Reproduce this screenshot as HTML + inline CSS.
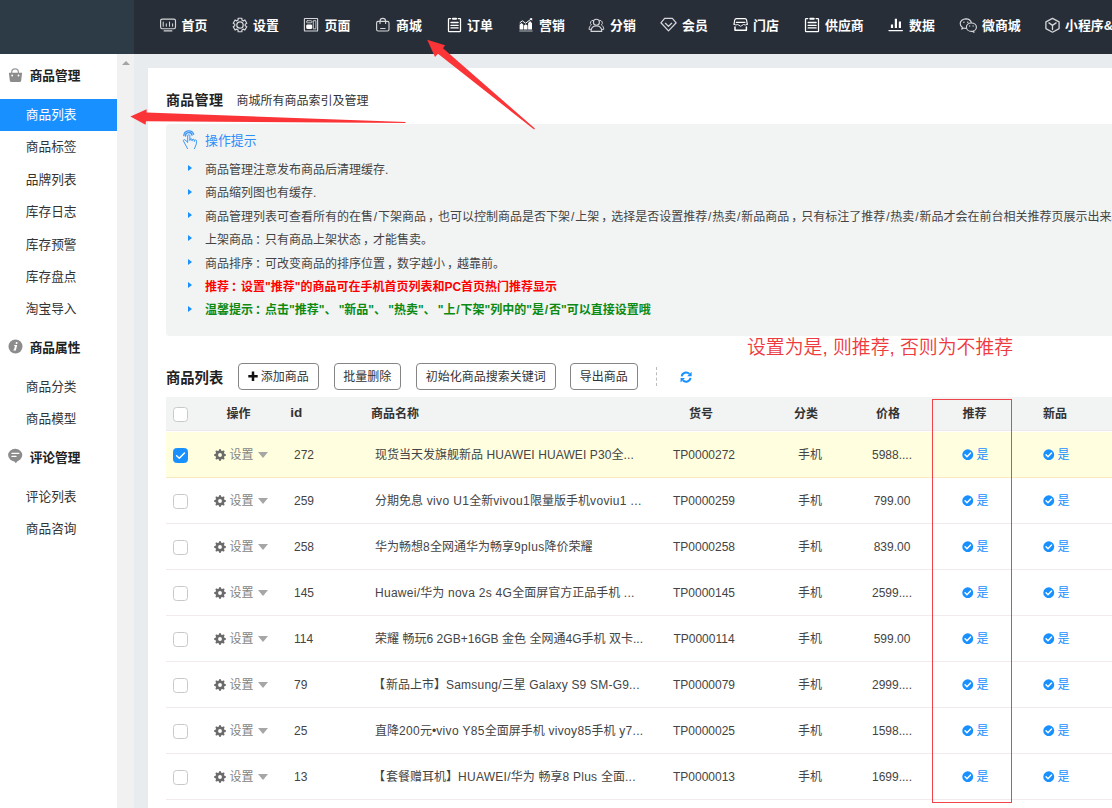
<!DOCTYPE html>
<html lang="zh-CN">
<head>
<meta charset="utf-8">
<title>商品管理</title>
<style>
*{box-sizing:border-box;margin:0;padding:0}
html,body{width:1112px;height:808px;overflow:hidden}
body{position:relative;background:#e9ecef;font-family:"Liberation Sans","Noto Sans CJK SC",sans-serif;font-size:12px;color:#444}
/* top nav */
#nav{position:absolute;left:0;top:0;width:1112px;height:54px;background:#282e38;overflow:hidden}
#navL{position:absolute;left:0;top:0;width:134px;height:54px;background:#2c3b45}
.nic{position:absolute;top:17px;width:18px;height:16px;overflow:visible}
.nt{position:absolute;top:15.600px;color:#fff;font-weight:bold;font-size:12.900px;line-height:20px;white-space:nowrap}
/* sidebar */
#side{position:absolute;left:0;top:54px;width:117px;height:754px;background:#fff}
#gut{position:absolute;left:117px;top:54px;width:17px;height:754px;background:#f1f1f1}
#gut i{position:absolute;left:4.500px;top:7px;width:0;height:0;border-left:4px solid transparent;border-right:4px solid transparent;border-bottom:4.500px solid #a3a3a3}
.sg{position:relative;height:45px;line-height:45px;font-size:12.700px;font-weight:bold;color:#222;padding-left:29.700px}
.sg svg{position:absolute;left:8px;top:14px;width:15px;height:15px;overflow:visible}
.si{height:32.400px;line-height:32.400px;font-size:12.700px;color:#333;padding-left:25.800px}
.si.on{background:#1890ff;color:#fff}
/* card */
#card{position:absolute;left:148px;top:68px;width:964px;height:740px;background:#fff}
#ttl{position:absolute;left:166px;top:90.300px;font-size:14px;letter-spacing:.3px;font-weight:bold;color:#222;line-height:20px}
#sub{position:absolute;left:236.500px;top:90.500px;font-size:12px;color:#333;line-height:20px}
#tips{position:absolute;left:166px;top:124px;width:960px;height:212px;background:#f2f4f4;border-radius:3.500px}
#hand{position:absolute;left:181px;top:130px;width:18px;height:20px;overflow:visible}
#tipt{position:absolute;left:205px;top:130.500px;font-size:12.900px;color:#2f8ef8;line-height:20px}
.tl{position:absolute;left:205px;font-size:12px;line-height:20px;color:#444;white-space:nowrap}
.tl i{position:absolute;left:-17px;top:5.200px;width:0;height:0;border-top:3.800px solid transparent;border-bottom:3.800px solid transparent;border-left:4.900px solid #1890ff}
.tl s{text-decoration:none;padding:0 .850px}
.tl u{text-decoration:none;margin-right:2.200px}
.tl em{font-style:normal;position:relative;left:2px}
.tl.r{color:#f00;font-weight:bold}
.tl.g{color:#0c8a12;font-weight:bold}
#ann{position:absolute;left:747px;top:334.700px;font-size:18.860px;line-height:26px;color:#ee3a3e;font-weight:350;white-space:nowrap}
/* toolbar */
#lt{position:absolute;left:166px;top:367.700px;font-size:14.300px;font-weight:bold;color:#222;line-height:20px}
.btn{position:absolute;top:363px;height:26.500px;border:1px solid #858585;border-radius:4px;background:#fff;font-size:12px;line-height:26.900px;color:#333;text-align:center;overflow:hidden;white-space:nowrap}
.btn b{position:absolute;left:9px;top:0;font-size:0}
#sep{position:absolute;left:656px;top:367px;width:0;height:19px;border-left:1px dashed #bbb}
#rf{position:absolute;left:679.500px;top:371.300px;width:12.200px;height:12.200px;overflow:visible}
/* table */
#th{position:absolute;left:166px;top:397px;width:946px;height:34px;border-bottom:1px solid #f1e8ea;background:#f2f4f4;font-weight:bold;color:#333}
#th span{position:absolute;top:7px;line-height:20px;font-size:12px;white-space:nowrap}
.tr{position:absolute;left:166px;width:946px;height:46px;border-bottom:1px solid #f2eaec;background:#fff}
.tr.sel{background:#ffffdf;border-bottom-color:#fbe9c4}
.cb{position:absolute;left:7px;top:15.900px;width:15px;height:15px;border:1px solid #c9c9c9;border-radius:3.500px;background:#fff}
.cb.on{background:#1890ff;border-color:#1890ff}
.cb svg{position:absolute;left:-1px;top:-1px;width:15px;height:15px}
.gr{position:absolute;left:48px;top:17.400px;width:12px;height:12px}
.car{position:absolute;left:92.200px;top:19.900px;width:0;height:0;border-left:5.400px solid transparent;border-right:5.400px solid transparent;border-top:6.300px solid #a6a6a6}
.c{position:absolute;top:12.800px;line-height:20px;font-size:12px;white-space:nowrap;color:#444}
.set{left:63.400px;margin-top:.5px;color:#858585}
.id{left:128px}
.nm{left:209px}
.br{margin-left:-2px;margin-right:1px}
.sn{left:488px;width:100px;text-align:center}
.cat{left:604px;width:80px;text-align:center}
.pr{left:686px;width:80px;text-align:center}
.y1,.y2{color:#1890ff}
.y1{left:796px} .y2{left:877px}
.ck{display:inline-block;vertical-align:-1.500px;width:11.500px;height:11.500px;margin-right:3px}
#box{position:absolute;left:932px;top:399px;width:80px;height:404px;border:1px solid #f0444a}
#arrows{position:absolute;left:0;top:0;width:1112px;height:808px;pointer-events:none}
</style>
</head>
<body>
<div id="nav">
<svg class="nic" style="left:159px" viewBox="0 0 18 16"><rect x="1.6" y="2.1" width="14.9" height="9.6" rx="1.6" fill="none" stroke="#d4d6d9" stroke-width="1.15" stroke-linecap="round" stroke-linejoin="round"/><path d="M5.2 13.9h7.6" fill="none" stroke="#d4d6d9" stroke-width="1.3" stroke-linecap="round" stroke-linejoin="round"/><path d="M4.2 5v4.300M7.300 6.800v2.500M10.500 5v4.300M13.600 6.800v2.500" fill="none" stroke="#d4d6d9" stroke-width="1.050" stroke-linecap="round" stroke-linejoin="round"/></svg><span class="nt" style="left:181.5px">首页</span>
<svg class="nic" style="left:232px" viewBox="0 0 18 16"><path d="M6.10 3.05 L6.10 1.25 L9.90 1.25 L9.90 3.05 L11.34 3.88 L12.90 2.98 L14.80 6.27 L13.23 7.17 L13.23 8.83 L14.80 9.73 L12.90 13.02 L11.34 12.12 L9.90 12.95 L9.90 14.75 L6.10 14.75 L6.10 12.95 L4.66 12.12 L3.10 13.02 L1.20 9.73 L2.77 8.83 L2.77 7.17 L1.20 6.27 L3.10 2.98 L4.66 3.88Z" fill="none" stroke="#d4d6d9" stroke-width="1.2" stroke-linecap="round" stroke-linejoin="round"/><circle cx="8" cy="8" r="3.2" fill="none" stroke="#d4d6d9" stroke-width="1.3" stroke-linecap="round" stroke-linejoin="round"/></svg><span class="nt" style="left:253px">设置</span>
<svg class="nic" style="left:303px" viewBox="0 0 18 16"><rect x="1.400" y="1.500" width="13.200" height="12.500" rx=".6" fill="none" stroke="#d4d6d9" stroke-width="1.15" stroke-linecap="round" stroke-linejoin="round"/><rect x="3.400" y="3.700" width="5.600" height="2.100" rx="1.050" fill="none" stroke="#d4d6d9" stroke-width=".9" stroke-linecap="round" stroke-linejoin="round"/><rect x="3.200" y="7.400" width="6" height="4.700" rx="1.400" fill="#fff"/><rect x="10.700" y="3.700" width="2.200" height="8.200" fill="none" stroke="#d4d6d9" stroke-width=".9" stroke-linecap="round" stroke-linejoin="round"/></svg><span class="nt" style="left:324.5px">页面</span>
<svg class="nic" style="left:375px" viewBox="0 0 18 16"><rect x="1.600" y="4.400" width="12.400" height="9.600" rx="1.500" fill="none" stroke="#d4d6d9" stroke-width="1.15" stroke-linecap="round" stroke-linejoin="round"/><path d="M5 6.500V4.200a2.800 2.800 0 0 1 5.600 0v2.300" fill="none" stroke="#d4d6d9" stroke-width="1.15" stroke-linecap="round" stroke-linejoin="round"/><path d="M5.600 11.500h4.500" fill="none" stroke="#d4d6d9" stroke-width="1.15" stroke-linecap="round" stroke-linejoin="round"/></svg><span class="nt" style="left:396px">商城</span>
<svg class="nic" style="left:447px" viewBox="0 0 18 16"><path d="M3.700 1.600H2.100a.6.6 0 0 0-.6.6V13.900a.6.6 0 0 0 .6.6H12.900a.6.6 0 0 0 .6-.6V2.200a.6.6 0 0 0-.6-.6H11.200" fill="none" stroke="#fff" stroke-width="1.250" stroke-linecap="round" stroke-linejoin="round"/><path d="M5.900 1.700h3.200" fill="none" stroke="#fff" stroke-width="1.900" stroke-linecap="round" stroke-linejoin="round"/><path d="M4 5.500h7.100M4 8.400h7.100M4 10.900h7.100" fill="none" stroke="#fff" stroke-width="1.350" stroke-linecap="round" stroke-linejoin="round"/></svg><span class="nt" style="left:467px">订单</span>
<svg class="nic" style="left:518px" viewBox="0 0 18 16"><path d="M1.600 12.500V7.700l1.900-1.800 1.900 1.800v4.800zM6 12.500V8.500l1.800-1.300 1.700 1.300v4zM10.100 12.500V6.200l2-2.200 1.900 2.200v6.300z" fill="#fff"/><path d="M1.300 14h13.300" fill="none" stroke="#c2c4c8" stroke-width=".9"/><path d="M1.700 5.900l2.600-2.100 3.300 2.400 6-4.600" fill="none" stroke="#fff" stroke-width="1"/><path d="M11.600 1.300h2.600v2.500z" fill="#fff"/></svg><span class="nt" style="left:539px">营销</span>
<svg class="nic" style="left:588px" viewBox="0 0 18 16"><circle cx="8.400" cy="5.200" r="3" fill="none" stroke="#d4d6d9" stroke-width="1.15" stroke-linecap="round" stroke-linejoin="round"/><path d="M3 14.300c0-3.300 2.300-5.300 5.400-5.300s5.400 2 5.400 5.300z" fill="none" stroke="#d4d6d9" stroke-width="1.15" stroke-linecap="round" stroke-linejoin="round"/><path d="M5.300 3.300A2.600 2.600 0 0 0 3.400 7.900C1.900 8.800 1.100 10.300 1 12.400h1.700" fill="none" stroke="#d4d6d9" stroke-width=".95" stroke-linecap="round" stroke-linejoin="round"/><path d="M11.500 3.300a2.600 2.600 0 0 1 1.900 4.600c1.500.9 2.300 2.400 2.400 4.500h-1.700" fill="none" stroke="#d4d6d9" stroke-width=".95" stroke-linecap="round" stroke-linejoin="round"/></svg><span class="nt" style="left:610px">分销</span>
<svg class="nic" style="left:660px" viewBox="0 0 18 16"><path d="M4.600 1.400h7.800l3.800 4.400-7.700 8.100L.9 5.800z" fill="none" stroke="#d4d6d9" stroke-width="1.250" stroke-linecap="round" stroke-linejoin="round"/><path d="M5.400 6.300l3.100 3.100 3.100-3.100" fill="none" stroke="#d4d6d9" stroke-width="1.250" stroke-linecap="round" stroke-linejoin="round"/></svg><span class="nt" style="left:682px">会员</span>
<svg class="nic" style="left:733px" viewBox="0 0 18 16"><path d="M1 7.300L1.700 3.100Q2 1.600 3.400 1.600H11.900Q13.300 1.600 13.600 3.100L14.300 7.300" fill="none" stroke="#fff" stroke-width="1.150" stroke-linecap="round" stroke-linejoin="round"/><path d="M3.400 5.400h8.500" fill="none" stroke="#fff" stroke-width="1.250" stroke-linecap="round" stroke-linejoin="round"/><path d="M1 7.400Q3 8.600 4.800 7.500L7.650 9.300L10.500 7.500Q12.300 8.600 14.300 7.400" fill="none" stroke="#fff" stroke-width=".9" stroke-linecap="round" stroke-linejoin="round"/><path d="M2 10V13.300H13.400V10" fill="none" stroke="#fff" stroke-width="1.500" stroke-linecap="round" stroke-linejoin="round"/></svg><span class="nt" style="left:753px">门店</span>
<svg class="nic" style="left:804px" viewBox="0 0 18 16"><path d="M3.700 1.600H2.100a.6.6 0 0 0-.6.6V13.900a.6.6 0 0 0 .6.6H13.900a.6.6 0 0 0 .6-.6V2.200a.6.6 0 0 0-.6-.6H12.100" fill="none" stroke="#fff" stroke-width="1.250" stroke-linecap="round" stroke-linejoin="round"/><path d="M6.200 1.700h3.600" fill="none" stroke="#fff" stroke-width="1.900" stroke-linecap="round" stroke-linejoin="round"/><path d="M4.200 5.500h7.900M4.200 8.400h7.900M4.200 10.900h7.900" fill="none" stroke="#fff" stroke-width="1.350" stroke-linecap="round" stroke-linejoin="round"/></svg><span class="nt" style="left:825px">供应商</span>
<svg class="nic" style="left:888px" viewBox="0 0 18 16"><path d="M4 7.500v3.400M7.900 1.700v9.200M11.900 4.400v6.500" fill="none" stroke="#fff" stroke-width="2.200" stroke-linecap="butt"/><path d="M1 13.600h13.400" fill="none" stroke="#fff" stroke-width="1.300" stroke-linecap="round"/></svg><span class="nt" style="left:909px">数据</span>
<svg class="nic" style="left:959px" viewBox="0 0 18 16"><path d="M7 1.900C3.700 1.900 1.200 4 1.200 6.600c0 1.500.8 2.800 2.100 3.700l-.5 1.800 2-1.100c.6.200 1.300.300 1.900.300" fill="none" stroke="#d4d6d9" stroke-width="1.15" stroke-linecap="round" stroke-linejoin="round"/><path d="M12.500 6.400C12 3.800 9.800 1.900 7 1.900" fill="none" stroke="#d4d6d9" stroke-width="1.15" stroke-linecap="round" stroke-linejoin="round"/><ellipse cx="12.400" cy="10.200" rx="5" ry="4.200" stroke="#d4d6d9" stroke-width="1.150" fill="#282e38"/><path d="M14.600 14l.4 1.300-1.500-.8" fill="none" stroke="#d4d6d9" stroke-width="1.15" stroke-linecap="round" stroke-linejoin="round"/><circle cx="4.900" cy="5.200" r=".7" fill="#d4d6d9"/><circle cx="8.800" cy="5.200" r=".7" fill="#d4d6d9"/><circle cx="10.700" cy="9" r=".65" fill="#d4d6d9"/><circle cx="14.100" cy="9" r=".65" fill="#d4d6d9"/></svg><span class="nt" style="left:982px">微商城</span>
<svg class="nic" style="left:1045px" viewBox="0 0 18 16"><path d="M7.500 1.400l6.600 3.500v6.700l-6.600 3.600-6.600-3.600V4.900z" fill="none" stroke="#d4d6d9" stroke-width="1.300" stroke-linecap="round" stroke-linejoin="round"/><path d="M3.900 5.900l3.600 2.500 3.600-2.500M7.500 8.400v4.200" fill="none" stroke="#d4d6d9" stroke-width="1.300" stroke-linecap="round" stroke-linejoin="round"/></svg><span class="nt" style="left:1065px">小程序&amp;</span>
</div>
<div id="navL"></div>
<div id="side">
<div class="sg"><svg viewBox="0 0 15 15"><path d="M3.700 5.200V4.300a3.350 3.350 0 0 1 6.700 0v.9" fill="none" stroke="#999" stroke-width="1.200"/><path d="M.9 4.700h13.200l-.9 7.900a1.600 1.600 0 0 1-1.600 1.500H3.400a1.600 1.600 0 0 1-1.600-1.500z" fill="#8c8c8c"/><circle cx="4.200" cy="7.500" r=".95" fill="#fff"/><circle cx="10.500" cy="7.500" r=".95" fill="#fff"/></svg>商品管理</div>
<div class="si on">商品列表</div>
<div class="si">商品标签</div>
<div class="si">品牌列表</div>
<div class="si">库存日志</div>
<div class="si">库存预警</div>
<div class="si">库存盘点</div>
<div class="si">淘宝导入</div>
<div class="sg"><svg style="top:13.100px;left:7.800px" viewBox="0 0 15 15"><circle cx="7.500" cy="7.500" r="7" fill="#8c8c8c"/><circle cx="8.600" cy="4" r="1.050" fill="#fff"/><path d="M7.200 6.100h2l-1.350 5.300h-2zM6.300 6.100h2.200v.8H6.100zM5.500 10.600h2.600l-.2.800H5.300z" fill="#fff"/></svg>商品属性</div>
<div class="si">商品分类</div>
<div class="si">商品模型</div>
<div class="sg"><svg style="top:13.500px" viewBox="0 0 15 15"><ellipse cx="7.200" cy="6.100" rx="7.100" ry="6.300" fill="#8c8c8c"/><path d="M5.800 11.700L7.800 14.300L10.200 11.300z" fill="#8c8c8c"/><path d="M3.900 4.300h7M3.900 7.400h4.100" stroke="#fff" stroke-width="1.250" stroke-linecap="round" fill="none"/></svg>评论管理</div>
<div class="si">评论列表</div>
<div class="si">商品咨询</div>
</div>
<div id="gut"><i></i></div>
<div id="card"></div>
<div id="ttl">商品管理</div>
<div id="sub">商城所有商品索引及管理</div>
<div id="tips"></div>
<svg id="hand" viewBox="0 0 18 20"><g fill="none" stroke="#3f98f7" stroke-width="1" stroke-linecap="round" stroke-linejoin="round"><path d="M6.700 12.200V5.800a1.100 1.100 0 0 1 2.200 0v4.600"/><path d="M8.900 9.800a1.100 1.100 0 0 1 2.200 0v1"/><path d="M11.100 10.300a1.100 1.100 0 0 1 2.200 0v1"/><path d="M13.300 10.900a1.150 1.150 0 0 1 2.300.3c0 2.600-.9 4.900-2.200 7.500"/><path d="M6.700 12.200L4 9.900c-.9-.7-2.100.2-1.500 1.200l4 7.500"/><path d="M4.500 6a3.300 3.300 0 0 1 6.500-.9" stroke-width="1.500"/><path d="M2.800 5.500a5.100 5.100 0 0 1 9.900-1.200" stroke-width="1.300"/></g></svg>
<div id="tipt">操作提示</div>
<div class="tl" style="top:160.0px"><i></i>商品管理注意发布商品后清理缓存.</div>
<div class="tl" style="top:183.4px"><i></i>商品缩列图也有缓存.</div>
<div class="tl" style="top:206.8px"><i></i>商品管理列表可查看所有的在售<s>/</s>下架商品<em>，</em>也可以控制商品是否下架<s>/</s>上架<em>，</em>选择是否设置推荐<s>/</s>热卖<s>/</s>新品商品<em>，</em>只有标注了推荐<s>/</s>热卖<s>/</s>新品才会在前台相关推荐页展示出来。</div>
<div class="tl" style="top:230.2px"><i></i>上架商品<em>：</em>只有商品上架状态<em>，</em>才能售卖。</div>
<div class="tl" style="top:253.6px"><i></i>商品排序<em>：</em>可改变商品的排序位置<em>，</em>数字越小<em>，</em>越靠前。</div>
<div class="tl r" style="top:277.0px"><i></i>推荐<em>：</em>设置"推荐"的商品可在手机首页列表和PC首页热门推荐显示</div>
<div class="tl g" style="top:300.4px"><i></i>温馨提示<em>：</em>点击"推荐"<u>、</u>"新品"<u>、</u>"热卖"<u>、</u>"上<s>/</s>下架"列中的"是<s>/</s>否"可以直接设置哦</div>

<div id="ann">设置为是, 则推荐, 否则为不推荐</div>
<div id="lt">商品列表</div>
<div class="btn" style="left:238px;width:80.600px;padding-left:13px"><svg style="position:absolute;left:9px;top:6.500px;width:10px;height:10.400px" viewBox="0 0 10 10"><path d="M5 .3v9.400M.3 5h9.400" stroke="#111" stroke-width="2.500" fill="none"/></svg>添加商品</div>
<div class="btn" style="left:334px;width:66.600px">批量删除</div>
<div class="btn" style="left:416px;width:139.600px">初始化商品搜索关键词</div>
<div class="btn" style="left:570px;width:67.500px">导出商品</div>
<div id="sep"></div>
<svg id="rf" viewBox="0 0 13 13"><g fill="none" stroke="#1890ff" stroke-width="2.100"><path d="M1.800 5.700A4.800 4.800 0 0 1 10 3.100"/><path d="M11.200 7.300A4.800 4.800 0 0 1 3 9.900"/></g><path d="M12.400.8v4.700H7.700zM.6 12.200V7.500h4.700z" fill="#1890ff"/></svg>
<div id="th"><b class="cb" style="top:10px"></b><span style="left:60.500px">操作</span><span style="left:124.300px;top:6.300px;font-size:13.500px">id</span><span style="left:205px">商品名称</span><span style="left:523px">货号</span><span style="left:628px">分类</span><span style="left:710px">价格</span><span style="left:796.500px">推荐</span><span style="left:877px">新品</span></div>
<div class="tr sel" style="top:432.0px"><b class="cb on"><svg viewBox="0 0 15 15"><path d="M3.600 7.700l2.700 2.600 5.200-5.400" fill="none" stroke="#fff" stroke-width="1.450" stroke-linecap="round" stroke-linejoin="round"/></svg></b><svg class="gr" viewBox="0 0 12 12"><path d="M6.0 0.1 L6.5 0.1 L6.9 0.7 L7.2 1.6 L7.5 1.8 L7.9 1.9 L8.3 2.1 L9.1 1.6 L9.8 1.5 L10.2 1.8 L10.5 2.2 L10.4 2.9 L9.9 3.7 L10.1 4.1 L10.2 4.5 L10.4 4.8 L11.3 5.1 L11.9 5.5 L11.9 6.0 L11.9 6.5 L11.3 6.9 L10.4 7.2 L10.2 7.5 L10.1 7.9 L9.9 8.3 L10.4 9.1 L10.5 9.8 L10.2 10.2 L9.8 10.5 L9.1 10.4 L8.3 9.9 L7.9 10.1 L7.5 10.2 L7.2 10.4 L6.9 11.3 L6.5 11.9 L6.0 11.9 L5.5 11.9 L5.1 11.3 L4.8 10.4 L4.5 10.2 L4.1 10.1 L3.7 9.9 L2.9 10.4 L2.2 10.5 L1.8 10.2 L1.5 9.8 L1.6 9.1 L2.1 8.3 L1.9 7.9 L1.8 7.5 L1.6 7.2 L0.7 6.9 L0.1 6.5 L0.1 6.0 L0.1 5.5 L0.7 5.1 L1.6 4.8 L1.8 4.5 L1.9 4.1 L2.1 3.7 L1.6 2.9 L1.5 2.2 L1.8 1.8 L2.2 1.5 L2.9 1.6 L3.7 2.1 L4.1 1.9 L4.5 1.8 L4.8 1.6 L5.1 0.7 L5.5 0.1ZM6 4.100a1.900 1.900 0 1 0 0 3.800a1.900 1.900 0 1 0 0-3.800z" fill="#6b6b6b" fill-rule="evenodd"/></svg><span class="c set">设置</span><i class="car"></i><span class="c id">272</span><span class="c nm">现货当天发旗舰新品<span style="letter-spacing:0.114px"> HUAWEI HUAWEI P30</span>全<span style="letter-spacing:0.114px">...</span></span><span class="c sn">TP0000272</span><span class="c cat">手机</span><span class="c pr">5988....</span><span class="c y1"><svg class="ck" viewBox="0 0 12 12"><circle cx="6" cy="6" r="5.700" fill="#1890ff"/><path d="M3.200 6.100l2 2 3.700-3.800" fill="none" stroke="#fff" stroke-width="1.500" stroke-linecap="round" stroke-linejoin="round"/></svg>是</span><span class="c y2"><svg class="ck" viewBox="0 0 12 12"><circle cx="6" cy="6" r="5.700" fill="#1890ff"/><path d="M3.200 6.100l2 2 3.700-3.800" fill="none" stroke="#fff" stroke-width="1.500" stroke-linecap="round" stroke-linejoin="round"/></svg>是</span></div>
<div class="tr" style="top:478.0px"><b class="cb"></b><svg class="gr" viewBox="0 0 12 12"><path d="M6.0 0.1 L6.5 0.1 L6.9 0.7 L7.2 1.6 L7.5 1.8 L7.9 1.9 L8.3 2.1 L9.1 1.6 L9.8 1.5 L10.2 1.8 L10.5 2.2 L10.4 2.9 L9.9 3.7 L10.1 4.1 L10.2 4.5 L10.4 4.8 L11.3 5.1 L11.9 5.5 L11.9 6.0 L11.9 6.5 L11.3 6.9 L10.4 7.2 L10.2 7.5 L10.1 7.9 L9.9 8.3 L10.4 9.1 L10.5 9.8 L10.2 10.2 L9.8 10.5 L9.1 10.4 L8.3 9.9 L7.9 10.1 L7.5 10.2 L7.2 10.4 L6.9 11.3 L6.5 11.9 L6.0 11.9 L5.5 11.9 L5.1 11.3 L4.8 10.4 L4.5 10.2 L4.1 10.1 L3.7 9.9 L2.9 10.4 L2.2 10.5 L1.8 10.2 L1.5 9.8 L1.6 9.1 L2.1 8.3 L1.9 7.9 L1.8 7.5 L1.6 7.2 L0.7 6.9 L0.1 6.5 L0.1 6.0 L0.1 5.5 L0.7 5.1 L1.6 4.8 L1.8 4.5 L1.9 4.1 L2.1 3.7 L1.6 2.9 L1.5 2.2 L1.8 1.8 L2.2 1.5 L2.9 1.6 L3.7 2.1 L4.1 1.9 L4.5 1.8 L4.8 1.6 L5.1 0.7 L5.5 0.1ZM6 4.100a1.900 1.900 0 1 0 0 3.800a1.900 1.900 0 1 0 0-3.800z" fill="#6b6b6b" fill-rule="evenodd"/></svg><span class="c set">设置</span><i class="car"></i><span class="c id">259</span><span class="c nm">分期免息<span style="letter-spacing:0.354px"> vivo U1</span>全新<span style="letter-spacing:0.354px">vivou1</span>限量版手机<span style="letter-spacing:0.354px">voviu1 ...</span></span><span class="c sn">TP0000259</span><span class="c cat">手机</span><span class="c pr">799.00</span><span class="c y1"><svg class="ck" viewBox="0 0 12 12"><circle cx="6" cy="6" r="5.700" fill="#1890ff"/><path d="M3.200 6.100l2 2 3.700-3.800" fill="none" stroke="#fff" stroke-width="1.500" stroke-linecap="round" stroke-linejoin="round"/></svg>是</span><span class="c y2"><svg class="ck" viewBox="0 0 12 12"><circle cx="6" cy="6" r="5.700" fill="#1890ff"/><path d="M3.200 6.100l2 2 3.700-3.800" fill="none" stroke="#fff" stroke-width="1.500" stroke-linecap="round" stroke-linejoin="round"/></svg>是</span></div>
<div class="tr" style="top:524.0px"><b class="cb"></b><svg class="gr" viewBox="0 0 12 12"><path d="M6.0 0.1 L6.5 0.1 L6.9 0.7 L7.2 1.6 L7.5 1.8 L7.9 1.9 L8.3 2.1 L9.1 1.6 L9.8 1.5 L10.2 1.8 L10.5 2.2 L10.4 2.9 L9.9 3.7 L10.1 4.1 L10.2 4.5 L10.4 4.8 L11.3 5.1 L11.9 5.5 L11.9 6.0 L11.9 6.5 L11.3 6.9 L10.4 7.2 L10.2 7.5 L10.1 7.9 L9.9 8.3 L10.4 9.1 L10.5 9.8 L10.2 10.2 L9.8 10.5 L9.1 10.4 L8.3 9.9 L7.9 10.1 L7.5 10.2 L7.2 10.4 L6.9 11.3 L6.5 11.9 L6.0 11.9 L5.5 11.9 L5.1 11.3 L4.8 10.4 L4.5 10.2 L4.1 10.1 L3.7 9.9 L2.9 10.4 L2.2 10.5 L1.8 10.2 L1.5 9.8 L1.6 9.1 L2.1 8.3 L1.9 7.9 L1.8 7.5 L1.6 7.2 L0.7 6.9 L0.1 6.5 L0.1 6.0 L0.1 5.5 L0.7 5.1 L1.6 4.8 L1.8 4.5 L1.9 4.1 L2.1 3.7 L1.6 2.9 L1.5 2.2 L1.8 1.8 L2.2 1.5 L2.9 1.6 L3.7 2.1 L4.1 1.9 L4.5 1.8 L4.8 1.6 L5.1 0.7 L5.5 0.1ZM6 4.100a1.900 1.900 0 1 0 0 3.800a1.900 1.900 0 1 0 0-3.800z" fill="#6b6b6b" fill-rule="evenodd"/></svg><span class="c set">设置</span><i class="car"></i><span class="c id">258</span><span class="c nm">华为畅想<span style="letter-spacing:0.350px">8</span>全网通华为畅享<span style="letter-spacing:0.350px">9plus</span>降价荣耀</span><span class="c sn">TP0000258</span><span class="c cat">手机</span><span class="c pr">839.00</span><span class="c y1"><svg class="ck" viewBox="0 0 12 12"><circle cx="6" cy="6" r="5.700" fill="#1890ff"/><path d="M3.200 6.100l2 2 3.700-3.800" fill="none" stroke="#fff" stroke-width="1.500" stroke-linecap="round" stroke-linejoin="round"/></svg>是</span><span class="c y2"><svg class="ck" viewBox="0 0 12 12"><circle cx="6" cy="6" r="5.700" fill="#1890ff"/><path d="M3.200 6.100l2 2 3.700-3.800" fill="none" stroke="#fff" stroke-width="1.500" stroke-linecap="round" stroke-linejoin="round"/></svg>是</span></div>
<div class="tr" style="top:570.0px"><b class="cb"></b><svg class="gr" viewBox="0 0 12 12"><path d="M6.0 0.1 L6.5 0.1 L6.9 0.7 L7.2 1.6 L7.5 1.8 L7.9 1.9 L8.3 2.1 L9.1 1.6 L9.8 1.5 L10.2 1.8 L10.5 2.2 L10.4 2.9 L9.9 3.7 L10.1 4.1 L10.2 4.5 L10.4 4.8 L11.3 5.1 L11.9 5.5 L11.9 6.0 L11.9 6.5 L11.3 6.9 L10.4 7.2 L10.2 7.5 L10.1 7.9 L9.9 8.3 L10.4 9.1 L10.5 9.8 L10.2 10.2 L9.8 10.5 L9.1 10.4 L8.3 9.9 L7.9 10.1 L7.5 10.2 L7.2 10.4 L6.9 11.3 L6.5 11.9 L6.0 11.9 L5.5 11.9 L5.1 11.3 L4.8 10.4 L4.5 10.2 L4.1 10.1 L3.7 9.9 L2.9 10.4 L2.2 10.5 L1.8 10.2 L1.5 9.8 L1.6 9.1 L2.1 8.3 L1.9 7.9 L1.8 7.5 L1.6 7.2 L0.7 6.9 L0.1 6.5 L0.1 6.0 L0.1 5.5 L0.7 5.1 L1.6 4.8 L1.8 4.5 L1.9 4.1 L2.1 3.7 L1.6 2.9 L1.5 2.2 L1.8 1.8 L2.2 1.5 L2.9 1.6 L3.7 2.1 L4.1 1.9 L4.5 1.8 L4.8 1.6 L5.1 0.7 L5.5 0.1ZM6 4.100a1.900 1.900 0 1 0 0 3.800a1.900 1.900 0 1 0 0-3.800z" fill="#6b6b6b" fill-rule="evenodd"/></svg><span class="c set">设置</span><i class="car"></i><span class="c id">145</span><span class="c nm"><span style="letter-spacing:0.282px">Huawei/</span>华为<span style="letter-spacing:0.282px"> nova 2s 4G</span>全面屏官方正品手机<span style="letter-spacing:0.282px"> ...</span></span><span class="c sn">TP0000145</span><span class="c cat">手机</span><span class="c pr">2599....</span><span class="c y1"><svg class="ck" viewBox="0 0 12 12"><circle cx="6" cy="6" r="5.700" fill="#1890ff"/><path d="M3.200 6.100l2 2 3.700-3.800" fill="none" stroke="#fff" stroke-width="1.500" stroke-linecap="round" stroke-linejoin="round"/></svg>是</span><span class="c y2"><svg class="ck" viewBox="0 0 12 12"><circle cx="6" cy="6" r="5.700" fill="#1890ff"/><path d="M3.200 6.100l2 2 3.700-3.800" fill="none" stroke="#fff" stroke-width="1.500" stroke-linecap="round" stroke-linejoin="round"/></svg>是</span></div>
<div class="tr" style="top:616.0px"><b class="cb"></b><svg class="gr" viewBox="0 0 12 12"><path d="M6.0 0.1 L6.5 0.1 L6.9 0.7 L7.2 1.6 L7.5 1.8 L7.9 1.9 L8.3 2.1 L9.1 1.6 L9.8 1.5 L10.2 1.8 L10.5 2.2 L10.4 2.9 L9.9 3.7 L10.1 4.1 L10.2 4.5 L10.4 4.8 L11.3 5.1 L11.9 5.5 L11.9 6.0 L11.9 6.5 L11.3 6.9 L10.4 7.2 L10.2 7.5 L10.1 7.9 L9.9 8.3 L10.4 9.1 L10.5 9.8 L10.2 10.2 L9.8 10.5 L9.1 10.4 L8.3 9.9 L7.9 10.1 L7.5 10.2 L7.2 10.4 L6.9 11.3 L6.5 11.9 L6.0 11.9 L5.5 11.9 L5.1 11.3 L4.8 10.4 L4.5 10.2 L4.1 10.1 L3.7 9.9 L2.9 10.4 L2.2 10.5 L1.8 10.2 L1.5 9.8 L1.6 9.1 L2.1 8.3 L1.9 7.9 L1.8 7.5 L1.6 7.2 L0.7 6.9 L0.1 6.5 L0.1 6.0 L0.1 5.5 L0.7 5.1 L1.6 4.8 L1.8 4.5 L1.9 4.1 L2.1 3.7 L1.6 2.9 L1.5 2.2 L1.8 1.8 L2.2 1.5 L2.9 1.6 L3.7 2.1 L4.1 1.9 L4.5 1.8 L4.8 1.6 L5.1 0.7 L5.5 0.1ZM6 4.100a1.900 1.900 0 1 0 0 3.800a1.900 1.900 0 1 0 0-3.800z" fill="#6b6b6b" fill-rule="evenodd"/></svg><span class="c set">设置</span><i class="car"></i><span class="c id">114</span><span class="c nm">荣耀<span style="letter-spacing:0.047px"> </span>畅玩<span style="letter-spacing:0.047px">6 2GB+16GB </span>金色<span style="letter-spacing:0.047px"> </span>全网通<span style="letter-spacing:0.047px">4G</span>手机<span style="letter-spacing:0.047px"> </span>双卡<span style="letter-spacing:0.047px">...</span></span><span class="c sn">TP0000114</span><span class="c cat">手机</span><span class="c pr">599.00</span><span class="c y1"><svg class="ck" viewBox="0 0 12 12"><circle cx="6" cy="6" r="5.700" fill="#1890ff"/><path d="M3.200 6.100l2 2 3.700-3.800" fill="none" stroke="#fff" stroke-width="1.500" stroke-linecap="round" stroke-linejoin="round"/></svg>是</span><span class="c y2"><svg class="ck" viewBox="0 0 12 12"><circle cx="6" cy="6" r="5.700" fill="#1890ff"/><path d="M3.200 6.100l2 2 3.700-3.800" fill="none" stroke="#fff" stroke-width="1.500" stroke-linecap="round" stroke-linejoin="round"/></svg>是</span></div>
<div class="tr" style="top:662.0px"><b class="cb"></b><svg class="gr" viewBox="0 0 12 12"><path d="M6.0 0.1 L6.5 0.1 L6.9 0.7 L7.2 1.6 L7.5 1.8 L7.9 1.9 L8.3 2.1 L9.1 1.6 L9.8 1.5 L10.2 1.8 L10.5 2.2 L10.4 2.9 L9.9 3.7 L10.1 4.1 L10.2 4.5 L10.4 4.8 L11.3 5.1 L11.9 5.5 L11.9 6.0 L11.9 6.5 L11.3 6.9 L10.4 7.2 L10.2 7.5 L10.1 7.9 L9.9 8.3 L10.4 9.1 L10.5 9.8 L10.2 10.2 L9.8 10.5 L9.1 10.4 L8.3 9.9 L7.9 10.1 L7.5 10.2 L7.2 10.4 L6.9 11.3 L6.5 11.9 L6.0 11.9 L5.5 11.9 L5.1 11.3 L4.8 10.4 L4.5 10.2 L4.1 10.1 L3.7 9.9 L2.9 10.4 L2.2 10.5 L1.8 10.2 L1.5 9.8 L1.6 9.1 L2.1 8.3 L1.9 7.9 L1.8 7.5 L1.6 7.2 L0.7 6.9 L0.1 6.5 L0.1 6.0 L0.1 5.5 L0.7 5.1 L1.6 4.8 L1.8 4.5 L1.9 4.1 L2.1 3.7 L1.6 2.9 L1.5 2.2 L1.8 1.8 L2.2 1.5 L2.9 1.6 L3.7 2.1 L4.1 1.9 L4.5 1.8 L4.8 1.6 L5.1 0.7 L5.5 0.1ZM6 4.100a1.900 1.900 0 1 0 0 3.800a1.900 1.900 0 1 0 0-3.800z" fill="#6b6b6b" fill-rule="evenodd"/></svg><span class="c set">设置</span><i class="car"></i><span class="c id">79</span><span class="c nm"><span class="br">【</span>新品上市】<span style="letter-spacing:0.207px">Samsung/</span>三星<span style="letter-spacing:0.207px"> Galaxy S9 SM-G9...</span></span><span class="c sn">TP0000079</span><span class="c cat">手机</span><span class="c pr">2999....</span><span class="c y1"><svg class="ck" viewBox="0 0 12 12"><circle cx="6" cy="6" r="5.700" fill="#1890ff"/><path d="M3.200 6.100l2 2 3.700-3.800" fill="none" stroke="#fff" stroke-width="1.500" stroke-linecap="round" stroke-linejoin="round"/></svg>是</span><span class="c y2"><svg class="ck" viewBox="0 0 12 12"><circle cx="6" cy="6" r="5.700" fill="#1890ff"/><path d="M3.200 6.100l2 2 3.700-3.800" fill="none" stroke="#fff" stroke-width="1.500" stroke-linecap="round" stroke-linejoin="round"/></svg>是</span></div>
<div class="tr" style="top:708.0px"><b class="cb"></b><svg class="gr" viewBox="0 0 12 12"><path d="M6.0 0.1 L6.5 0.1 L6.9 0.7 L7.2 1.6 L7.5 1.8 L7.9 1.9 L8.3 2.1 L9.1 1.6 L9.8 1.5 L10.2 1.8 L10.5 2.2 L10.4 2.9 L9.9 3.7 L10.1 4.1 L10.2 4.5 L10.4 4.8 L11.3 5.1 L11.9 5.5 L11.9 6.0 L11.9 6.5 L11.3 6.9 L10.4 7.2 L10.2 7.5 L10.1 7.9 L9.9 8.3 L10.4 9.1 L10.5 9.8 L10.2 10.2 L9.8 10.5 L9.1 10.4 L8.3 9.9 L7.9 10.1 L7.5 10.2 L7.2 10.4 L6.9 11.3 L6.5 11.9 L6.0 11.9 L5.5 11.9 L5.1 11.3 L4.8 10.4 L4.5 10.2 L4.1 10.1 L3.7 9.9 L2.9 10.4 L2.2 10.5 L1.8 10.2 L1.5 9.8 L1.6 9.1 L2.1 8.3 L1.9 7.9 L1.8 7.5 L1.6 7.2 L0.7 6.9 L0.1 6.5 L0.1 6.0 L0.1 5.5 L0.7 5.1 L1.6 4.8 L1.8 4.5 L1.9 4.1 L2.1 3.7 L1.6 2.9 L1.5 2.2 L1.8 1.8 L2.2 1.5 L2.9 1.6 L3.7 2.1 L4.1 1.9 L4.5 1.8 L4.8 1.6 L5.1 0.7 L5.5 0.1ZM6 4.100a1.900 1.900 0 1 0 0 3.800a1.900 1.900 0 1 0 0-3.800z" fill="#6b6b6b" fill-rule="evenodd"/></svg><span class="c set">设置</span><i class="car"></i><span class="c id">25</span><span class="c nm">直降<span style="letter-spacing:0.336px">200</span>元•<span style="letter-spacing:0.336px">vivo Y85</span>全面屏手机<span style="letter-spacing:0.336px"> vivoy85</span>手机<span style="letter-spacing:0.336px"> y7...</span></span><span class="c sn">TP0000025</span><span class="c cat">手机</span><span class="c pr">1598....</span><span class="c y1"><svg class="ck" viewBox="0 0 12 12"><circle cx="6" cy="6" r="5.700" fill="#1890ff"/><path d="M3.200 6.100l2 2 3.700-3.800" fill="none" stroke="#fff" stroke-width="1.500" stroke-linecap="round" stroke-linejoin="round"/></svg>是</span><span class="c y2"><svg class="ck" viewBox="0 0 12 12"><circle cx="6" cy="6" r="5.700" fill="#1890ff"/><path d="M3.200 6.100l2 2 3.700-3.800" fill="none" stroke="#fff" stroke-width="1.500" stroke-linecap="round" stroke-linejoin="round"/></svg>是</span></div>
<div class="tr" style="top:754.0px"><b class="cb"></b><svg class="gr" viewBox="0 0 12 12"><path d="M6.0 0.1 L6.5 0.1 L6.9 0.7 L7.2 1.6 L7.5 1.8 L7.9 1.9 L8.3 2.1 L9.1 1.6 L9.8 1.5 L10.2 1.8 L10.5 2.2 L10.4 2.9 L9.9 3.7 L10.1 4.1 L10.2 4.5 L10.4 4.8 L11.3 5.1 L11.9 5.5 L11.9 6.0 L11.9 6.5 L11.3 6.9 L10.4 7.2 L10.2 7.5 L10.1 7.9 L9.9 8.3 L10.4 9.1 L10.5 9.8 L10.2 10.2 L9.8 10.5 L9.1 10.4 L8.3 9.9 L7.9 10.1 L7.5 10.2 L7.2 10.4 L6.9 11.3 L6.5 11.9 L6.0 11.9 L5.5 11.9 L5.1 11.3 L4.8 10.4 L4.5 10.2 L4.1 10.1 L3.7 9.9 L2.9 10.4 L2.2 10.5 L1.8 10.2 L1.5 9.8 L1.6 9.1 L2.1 8.3 L1.9 7.9 L1.8 7.5 L1.6 7.2 L0.7 6.9 L0.1 6.5 L0.1 6.0 L0.1 5.5 L0.7 5.1 L1.6 4.8 L1.8 4.5 L1.9 4.1 L2.1 3.7 L1.6 2.9 L1.5 2.2 L1.8 1.8 L2.2 1.5 L2.9 1.6 L3.7 2.1 L4.1 1.9 L4.5 1.8 L4.8 1.6 L5.1 0.7 L5.5 0.1ZM6 4.100a1.900 1.900 0 1 0 0 3.800a1.900 1.900 0 1 0 0-3.800z" fill="#6b6b6b" fill-rule="evenodd"/></svg><span class="c set">设置</span><i class="car"></i><span class="c id">13</span><span class="c nm"><span class="br">【</span>套餐赠耳机】<span style="letter-spacing:0.267px">HUAWEI/</span>华为<span style="letter-spacing:0.267px"> </span>畅享<span style="letter-spacing:0.267px">8 Plus </span>全面<span style="letter-spacing:0.267px">...</span></span><span class="c sn">TP0000013</span><span class="c cat">手机</span><span class="c pr">1699....</span><span class="c y1"><svg class="ck" viewBox="0 0 12 12"><circle cx="6" cy="6" r="5.700" fill="#1890ff"/><path d="M3.200 6.100l2 2 3.700-3.800" fill="none" stroke="#fff" stroke-width="1.500" stroke-linecap="round" stroke-linejoin="round"/></svg>是</span><span class="c y2"><svg class="ck" viewBox="0 0 12 12"><circle cx="6" cy="6" r="5.700" fill="#1890ff"/><path d="M3.200 6.100l2 2 3.700-3.800" fill="none" stroke="#fff" stroke-width="1.500" stroke-linecap="round" stroke-linejoin="round"/></svg>是</span></div>

<div id="box"></div>
<svg id="arrows" viewBox="0 0 1112 808"><polygon points="427.200,39.800 445.100,45.300 443,48.300 534.900,128.500 534.100,129.500 438,53.700 435,56.900" fill="#fb3437"/><polygon points="130.400,116.600 146.600,109.300 146.600,112.500 405.500,122 405.500,123 146,121.200 145.500,124.700" fill="#fb3437"/></svg>
</body>
</html>
